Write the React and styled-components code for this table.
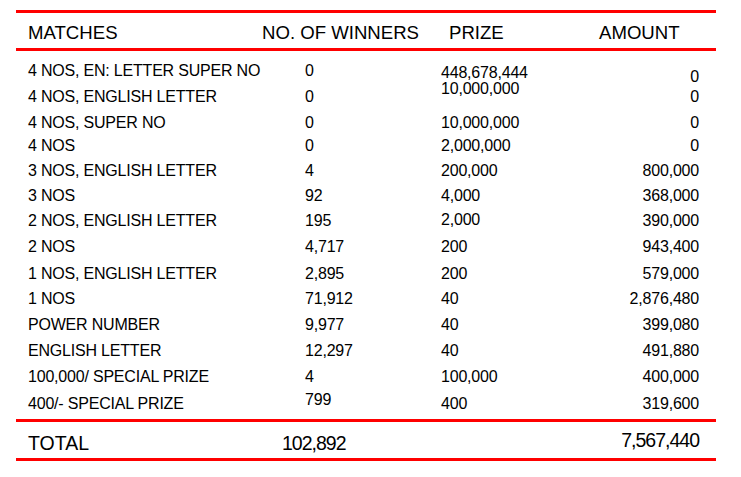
import React from "react";
import styled, { createGlobalStyle } from "styled-components";

const Global = createGlobalStyle`
  html, body { margin: 0; padding: 0; background: #ffffff; }
  body { font-family: "Liberation Sans", Arial, sans-serif; color: #000; }
`;

const Sheet = styled.div`
  width: 700px;
  margin: 10px 0 0 16px;
  border-top: 3px solid #ff0000;
`;

const HeaderRow = styled.div`
  display: grid;
  grid-template-columns: 234px 187px 150px 1fr;
  height: 38px;
  box-sizing: border-box;
  padding: 4px 0 0 12px;
  align-items: start;
  border-bottom: 3px solid #ff0000;
  font-size: 18.6px;
  line-height: 31px;
`;

const HeadCell = styled.div`
  white-space: nowrap;
`;

const Body = styled.div`
  padding-top: 10.3px;
  height: 371px;
  box-sizing: border-box;
  border-bottom: 3px solid #ff0000;
`;

const Row = styled.div`
  display: grid;
  grid-template-columns: 277px 136px 150px 1fr;
  padding: 0 17px 0 12px;
  font-size: 16px;
  letter-spacing: -0.2px;
  line-height: 20px;
  align-items: start;
`;

const Cell = styled.div`
  white-space: nowrap;
  text-align: ${(p) => (p.$right ? "right" : "left")};
  margin-top: ${(p) => p.$shift || 0}px;
`;

const TotalRow = styled.div`
  display: grid;
  grid-template-columns: 254px 1fr auto;
  height: 39px;
  box-sizing: border-box;
  padding: 6px 17px 0 12px;
  font-size: 19.5px;
  line-height: 30px;
  border-bottom: 3px solid #ff0000;
`;

const TotalCell = styled.div`
  white-space: nowrap;
  letter-spacing: ${(p) => (p.$num ? "-1px" : "0")};
  margin-top: ${(p) => p.$shift || 0}px;
`;

const rows = [
  { m: "4 NOS, EN: LETTER SUPER NO", w: "0", p: "448,678,444", a: "0", h: 25.7, ps: 1.7, as: 5.7 },
  { m: "4 NOS, ENGLISH LETTER", w: "0", p: "10,000,000", a: "0", h: 25.7, ps: -8 },
  { m: "4 NOS, SUPER NO", w: "0", p: "10,000,000", a: "0", h: 23 },
  { m: "4 NOS", w: "0", p: "2,000,000", a: "0", h: 25.8 },
  { m: "3 NOS, ENGLISH LETTER", w: "4", p: "200,000", a: "800,000", h: 24.5 },
  { m: "3 NOS", w: "92", p: "4,000", a: "368,000", h: 25 },
  { m: "2 NOS, ENGLISH LETTER", w: "195", p: "2,000", a: "390,000", h: 26, ps: -1 },
  { m: "2 NOS", w: "4,717", p: "200", a: "943,400", h: 27 },
  { m: "1 NOS, ENGLISH LETTER", w: "2,895", p: "200", a: "579,000", h: 25 },
  { m: "1 NOS", w: "71,912", p: "40", a: "2,876,480", h: 26 },
  { m: "POWER NUMBER", w: "9,977", p: "40", a: "399,080", h: 26 },
  { m: "ENGLISH LETTER", w: "12,297", p: "40", a: "491,880", h: 26 },
  { m: "100,000/ SPECIAL PRIZE", w: "4", p: "100,000", a: "400,000", h: 26.7 },
  { m: "400/- SPECIAL PRIZE", w: "799", p: "400", a: "319,600", h: 25, ws: -3.2 },
];

export default function App() {
  return (
    <>
      <Global />
      <Sheet>
        <HeaderRow>
          <HeadCell>MATCHES</HeadCell>
          <HeadCell>NO. OF WINNERS</HeadCell>
          <HeadCell>PRIZE</HeadCell>
          <HeadCell>AMOUNT</HeadCell>
        </HeaderRow>
        <Body>
          {rows.map((r) => (
            <Row key={r.m} style={{ height: r.h + "px" }}>
              <Cell>{r.m}</Cell>
              <Cell $shift={r.ws}>{r.w}</Cell>
              <Cell $shift={r.ps}>{r.p}</Cell>
              <Cell $right $shift={r.as}>{r.a}</Cell>
            </Row>
          ))}
        </Body>
        <TotalRow>
          <TotalCell>TOTAL</TotalCell>
          <TotalCell $num>102,892</TotalCell>
          <TotalCell $num $shift={-2.7}>7,567,440</TotalCell>
        </TotalRow>
      </Sheet>
    </>
  );
}
